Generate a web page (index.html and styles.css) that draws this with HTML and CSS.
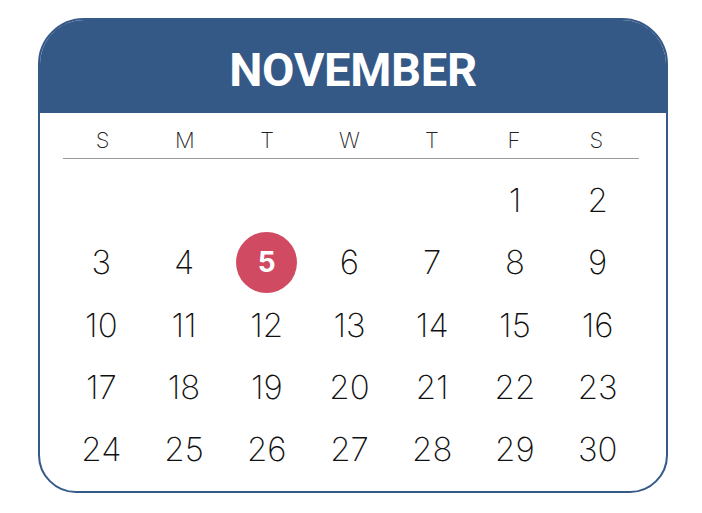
FILE: index.html
```html
<!DOCTYPE html>
<html>
<head>
<meta charset="utf-8">
<link rel="stylesheet" href="styles.css">
</head>
<body>
<div class="card">
  <div class="header">NOVEMBER</div>
  <div class="body">
    <div class="week">
      <span>S</span><span>M</span><span>T</span><span>W</span><span>T</span><span>F</span><span>S</span>
    </div>
    <div class="days">
      <span></span><span></span><span></span><span></span><span></span><span>1</span><span>2</span>
      <span>3</span><span>4</span><span><b class="today">5</b></span><span>6</span><span>7</span><span>8</span><span>9</span>
      <span>10</span><span>11</span><span>12</span><span>13</span><span>14</span><span>15</span><span>16</span>
      <span>17</span><span>18</span><span>19</span><span>20</span><span>21</span><span>22</span><span>23</span>
      <span>24</span><span>25</span><span>26</span><span>27</span><span>28</span><span>29</span><span>30</span>
    </div>
  </div>
</div>
</body>
</html>
```
FILE: styles.css
```css
html, body { margin: 0; padding: 0; background: #fff; }
body { padding: 18px 0 0 38px; font-family: "Inter", "Open Sans", sans-serif; }
.card {
  width: 630px;
  height: 475px;
  box-sizing: border-box;
  border: 2px solid #355a88;
  border-radius: 46px 46px 38px 38px;
  overflow: hidden;
  display: flex;
  flex-direction: column;
}
.header {
  height: 93px;
  background: #355987;
  color: #fff;
  font-family: "Roboto", "Liberation Sans", sans-serif;
  font-weight: 700;
  font-size: 47px;
  display: flex;
  align-items: center;
  justify-content: center;
  padding-top: 6px;
  box-sizing: border-box;
  letter-spacing: -0.3px;
}
.body { padding: 0 27px 0 20px; }
.week {
  display: grid;
  grid-template-columns: repeat(7, 1fr);
  height: 45px;
  align-items: center;
  border-bottom: 1.5px solid #9a9a9a;
  margin: 0 0 0 3px;
  font-weight: 200;
  font-size: 22px;
  color: #222;
  text-align: center;
}
.week span { padding-top: 8px; margin-left: -3px; }
.days {
  display: grid;
  grid-template-columns: repeat(7, 1fr);
  grid-auto-rows: 62.3px;
  align-items: center;
  text-align: center;
  font-weight: 200;
  font-size: 33px;
  color: #111;
  padding-top: 10px;
}
.days span { display: flex; justify-content: center; align-items: center; }
.today {
  width: 61px;
  height: 61px;
  border-radius: 50%;
  background: #d04a62;
  color: #fff;
  font-family: "Inter", sans-serif;
  font-weight: 700;
  font-size: 28px;
  display: flex;
  align-items: center;
  justify-content: center;
}
```
